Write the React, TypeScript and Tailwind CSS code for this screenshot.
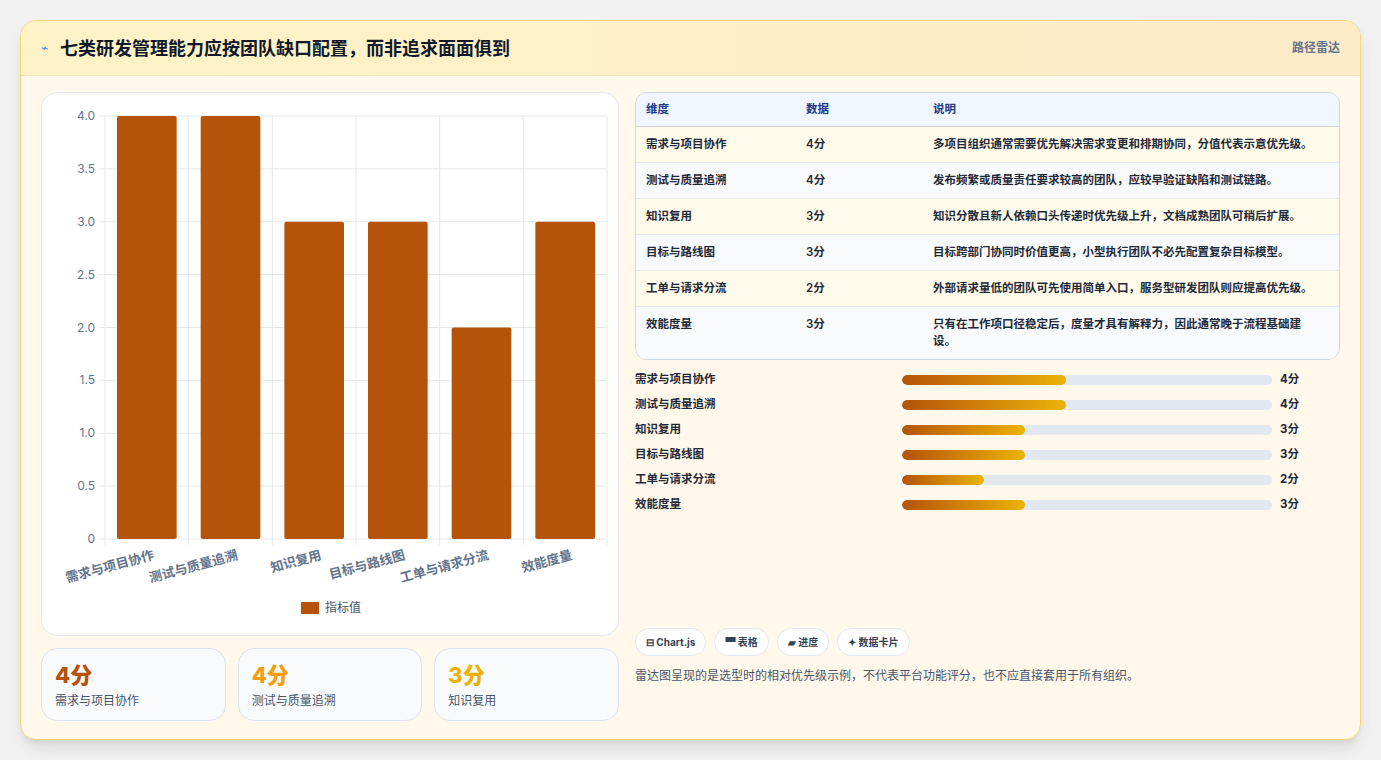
import React from "react";

const data = [
  { n: "需求与项目协作", v: 4, d: "多项目组织通常需要优先解决需求变更和排期协同，分值代表示意优先级。" },
  { n: "测试与质量追溯", v: 4, d: "发布频繁或质量责任要求较高的团队，应较早验证缺陷和测试链路。" },
  { n: "知识复用", v: 3, d: "知识分散且新人依赖口头传递时优先级上升，文档成熟团队可稍后扩展。" },
  { n: "目标与路线图", v: 3, d: "目标跨部门协同时价值更高，小型执行团队不必先配置复杂目标模型。" },
  { n: "工单与请求分流", v: 2, d: "外部请求量低的团队可先使用简单入口，服务型研发团队则应提高优先级。" },
  { n: "效能度量", v: 3, d: "只有在工作项口径稳定后，度量才具有解释力，因此通常晚于流程基础建设。" },
];

function Chart() {
  const x0 = 63, x1 = 565, y0 = 23, y1 = 446;
  const cw = (x1 - x0) / 6;
  const ticks = [0, 0.5, 1, 1.5, 2, 2.5, 3, 3.5, 4];
  const yy = (v: number) => y1 - (v / 4) * (y1 - y0);
  return (
    <svg width="578" height="544" className="block" style={{ fontFamily: "Inter, 'Noto Sans CJK SC', sans-serif" }}>
      {ticks.map((t) => (
        <g key={t}>
          <line x1={x0 - 6} x2={x1} y1={yy(t)} y2={yy(t)} stroke="#e5e7eb" />
          <text x={x0 - 10} y={yy(t) + 4} textAnchor="end" fontSize="12" fill="#64748b">{t === 0 ? "0" : t.toFixed(1)}</text>
        </g>
      ))}
      {Array.from({ length: 7 }).map((_, i) => (
        <line key={i} x1={x0 + i * cw} x2={x0 + i * cw} y1={y0} y2={y1 + 6} stroke="#e5e7eb" />
      ))}
      {data.map((d, i) => (
        <g key={d.n}>
          <rect x={x0 + i * cw + 12} y={yy(d.v)} width={cw - 24} height={y1 - yy(d.v)} rx="2" fill="#b45309" />
          <text transform={`translate(${x0 + i * cw + cw / 2 + 8},${y1 + 20}) rotate(-15)`} textAnchor="end" fontSize="13" fontWeight="600" fill="#64748b">{d.n}</text>
        </g>
      ))}
      <rect x="259" y="509" width="18" height="12" fill="#b45309" />
      <text x="283" y="519" fontSize="12" fill="#475569">指标值</text>
    </svg>
  );
}

export default function App() {
  return (
    <div className="min-h-[760px] bg-[#f1f1f1] pt-5 px-5" style={{ fontFamily: "Inter, 'Noto Sans CJK SC', sans-serif" }}>
      <div className="w-[1341px] h-[720px] rounded-2xl border border-[#f5d77a] bg-[#fff8eb] overflow-hidden shadow-lg flex flex-col">
        <div className="h-[55px] flex items-center justify-between px-5 bg-gradient-to-r from-[#fef3c7] to-[#fdebc8] border-b border-[#f3e3c0]">
          <div className="flex items-center gap-3">
            <span className="text-[#3b82f6] text-xs">⌁</span>
            <h1 className="text-[18px] font-bold text-[#111827]">七类研发管理能力应按团队缺口配置，而非追求面面俱到</h1>
          </div>
          <span className="text-xs text-[#64748b] font-semibold">路径雷达</span>
        </div>
        <div className="flex gap-4 px-5 pt-4">
          <div className="w-[578px] flex flex-col gap-3">
            <div className="h-[544px] bg-white rounded-2xl border border-[#e5e7eb] overflow-hidden">
              <Chart />
            </div>
            <div className="grid grid-cols-3 gap-3">
              {[["4分", "#b45309", "需求与项目协作"], ["4分", "#f59e0b", "测试与质量追溯"], ["3分", "#eab308", "知识复用"]].map(([v, c, l]) => (
                <div key={l} className="h-[73px] rounded-2xl border border-[#dbe3ee] bg-[#f8fafc] px-[13px] pt-3">
                  <div className="text-[22px] font-extrabold leading-7" style={{ color: c }}>{v}</div>
                  <div className="text-xs text-[#475569] mt-1">{l}</div>
                </div>
              ))}
            </div>
          </div>
          <div className="w-[707px] flex flex-col">
            <div className="rounded-xl border border-[#cbd5e1] overflow-hidden text-[11.5px] text-[#1f2937] font-semibold">
              <div className="flex h-[34px] items-center bg-[#eff6ff] border-b border-[#cbd5e1] text-[#1e3a8a]">
                <div className="w-[170px] pl-[10px]">维度</div>
                <div className="w-[127px]">数据</div>
                <div className="flex-1">说明</div>
              </div>
              {data.map((d, i) => (
                <div key={d.n} className={`flex py-[9px] leading-[17px] border-b last:border-b-0 border-[#e2e8f0] ${i % 2 === 0 ? "bg-[#fffbeb]" : "bg-[#f8fafc]"}`}>
                  <div className="w-[170px] pl-[10px]">{d.n}</div>
                  <div className="w-[127px]">{d.v}分</div>
                  <div className="w-[382px]">{d.d}</div>
                </div>
              ))}
            </div>
            <div className="mt-[11px] flex flex-col gap-[7px]">
              {data.map((d) => (
                <div key={d.n} className="flex items-center h-[18px] text-[11.5px] font-semibold text-[#1f2937]">
                  <div className="w-[267px]">{d.n}</div>
                  <div className="w-[370px] h-[10px] rounded-full bg-[#e2e8f0] overflow-hidden">
                    <div className="h-full rounded-full bg-gradient-to-r from-[#b45309] to-[#eab308]" style={{ width: `${(d.v / 9) * 100}%` }} />
                  </div>
                  <div className="ml-2 font-bold">{d.v}分</div>
                </div>
              ))}
            </div>
            <div className="mt-[114px] flex gap-2 text-[10px] font-bold text-[#334155]">
              {["⊟ Chart.js", "▀ 表格", "▰ 进度", "✦ 数据卡片"].map((t) => (
                <span key={t} className="h-[28px] px-[10px] flex items-center rounded-full border border-[#e2e8f0] bg-white">{t}</span>
              ))}
            </div>
            <p className="mt-3 text-xs text-[#475569]">雷达图呈现的是选型时的相对优先级示例，不代表平台功能评分，也不应直接套用于所有组织。</p>
          </div>
        </div>
      </div>
    </div>
  );
}
